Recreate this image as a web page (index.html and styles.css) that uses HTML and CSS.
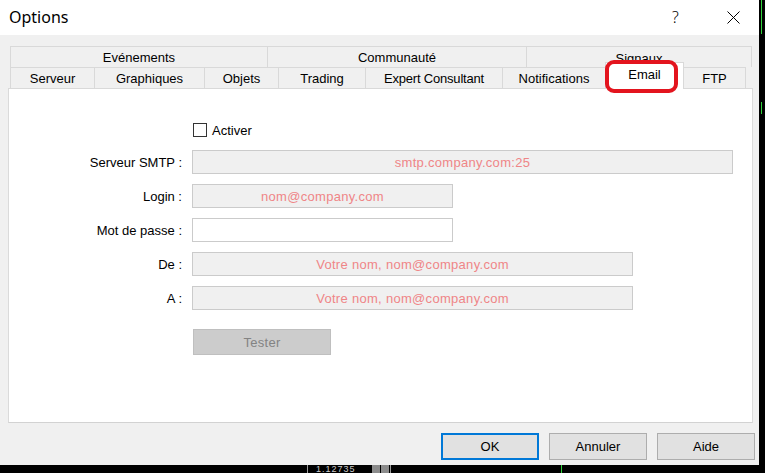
FILE: index.html
```html
<!DOCTYPE html>
<html lang="fr">
<head>
  <meta charset="UTF-8">
  <meta name="viewport" content="width=device-width, initial-scale=1.0">
  <title>Options</title>
  <link rel="stylesheet" href="styles.css">
</head>
<body>

<div class="screen">
  <div class="desk">
    <div class="window">
      <div class="titlebar">
        <span class="title">Options</span>
        <span class="help">?</span>
        <span class="close">
          <svg width="13" height="13" viewBox="0 0 13 13">
            <path d="M0.5 0.5 L12.5 12.5 M12.5 0.5 L0.5 12.5" stroke="#000" stroke-width="1" fill="none"/>
          </svg>
        </span>
      </div>

      <div class="client">
        <div class="tabs">
          <div class="tab-row">
            <div class="tab t-events">Evénements</div>
            <div class="tab t-community">Communauté</div>
            <div class="tab t-signals">Signaux</div>
          </div>
          <div class="tab-row">
            <div class="tab t-server">Serveur</div>
            <div class="tab t-charts">Graphiques</div>
            <div class="tab t-objects">Objets</div>
            <div class="tab t-trading">Trading</div>
            <div class="tab t-expert">Expert Consultant</div>
            <div class="tab t-notif">Notifications</div>
            <div class="tab t-email selected">
              Email
              <span class="highlight"></span>
            </div>
            <div class="tab t-ftp">FTP</div>
          </div>
        </div>

        <div class="panel">
          <div class="check-row">
            <span class="checkbox"></span>
            <span>Activer</span>
          </div>

          <div class="field first">
            <label>Serveur SMTP :</label>
            <div class="input wide">smtp.company.com:25</div>
          </div>
          <div class="field">
            <label>Login :</label>
            <div class="input short">nom@company.com</div>
          </div>
          <div class="field">
            <label>Mot de passe :</label>
            <div class="input short empty"></div>
          </div>
          <div class="field">
            <label>De :</label>
            <div class="input medium">Votre nom, nom@company.com</div>
          </div>
          <div class="field">
            <label>A :</label>
            <div class="input medium">Votre nom, nom@company.com</div>
          </div>

          <div class="test-row">
            <button class="tester" disabled>Tester</button>
          </div>
        </div>

        <div class="actions">
          <button class="btn default">OK</button>
          <button class="btn">Annuler</button>
          <button class="btn">Aide</button>
        </div>
      </div>
    </div>

    <!-- piece of the terminal behind the dialog -->
    <div class="edge">
      <span class="edge-green top"></span>
      <span class="edge-green mid"></span>
    </div>
  </div>

  <div class="taskbar">
    <span class="tick"></span>
    <span class="price">1.12735</span>
    <span class="sq"></span>
    <span class="sq"></span>
    <span class="tick"></span>
    <span class="green-line"></span>
  </div>
</div>

</body>
</html>
```

FILE: styles.css
```css
* {
  box-sizing: border-box;
}

body {
  margin: 0;
  width: 765px;
  height: 473px;
  overflow: hidden;
  font-family: "Liberation Sans", Arial, sans-serif;
  font-size: 13px;
  color: #000;
  background-color: #000;
}

.screen {
  display: flex;
  flex-direction: column;
  width: 765px;
  height: 473px;
}

.desk {
  display: flex;
  height: 465px;
}

.window {
  width: 759px;
  display: flex;
  flex-direction: column;
  background-color: #f0f0f0;
}

/* Title bar */
.titlebar {
  height: 35px;
  display: flex;
  align-items: center;
  padding-left: 9px;
  background-color: #fff;
}

.title {
  flex: 1;
  font-family: "Noto Sans", sans-serif;
  font-size: 16px;
  margin-top: -1px;
}

.help {
  width: 10px;
  font-family: "Noto Sans", sans-serif;
  font-size: 16px;
  font-weight: 300;
  margin-top: -2px;
}

.close {
  display: flex;
  margin-left: 45px;
  margin-right: 19px;
}

/* Client area */
.client {
  flex: 1;
  display: flex;
  flex-direction: column;
  padding-top: 11px;
}

.tabs {
  padding-left: 10px;
}

.tab-row {
  display: flex;
  height: 21px;
}

.tab {
  display: flex;
  align-items: center;
  justify-content: center;
  border: 1px solid #d9d9d9;
  border-bottom: none;
  margin-right: -1px;
  background-color: #f0f0f0;
  white-space: nowrap;
}

.t-events { width: 258px; }
.t-community { width: 260px; }
.t-signals { width: 226px; padding-top: 3px; }

.t-server { width: 85px; }
.t-charts { width: 111px; }
.t-objects { width: 75px; }
.t-trading { width: 88px; }
.t-expert { width: 138px; letter-spacing: -0.2px; }
.t-notif { width: 104px; }
.t-email { width: 79px; }
.t-ftp { width: 63px; }

.tab.selected {
  position: relative;
  z-index: 1;
  height: 27px;
  margin-top: -5px;
  padding-bottom: 4px;
  background-color: #fff;
}

/* red annotation drawn over the Email tab */
.highlight {
  position: absolute;
  left: -1px;
  top: -3px;
  width: 73px;
  height: 33px;
  border: 4px solid #e3141e;
  border-radius: 9px;
}

.panel {
  height: 335px;
  margin-left: 8px;
  margin-right: 6px;
  background-color: #fff;
  border: 1px solid #dadada;
  border-top: 1px solid #d9d9d9;
  border-bottom-color: #d2d2d2;
  padding-top: 34px;
  display: flex;
  flex-direction: column;
}

.check-row {
  display: flex;
  align-items: center;
  gap: 5px;
  height: 14px;
  padding-left: 184px;
}

.checkbox {
  width: 14px;
  height: 14px;
  border: 1px solid #333;
  background-color: #fff;
}

.field {
  display: flex;
  align-items: center;
  margin-top: 10px;
}

.field.first {
  margin-top: 13px;
}

.field label {
  width: 173px;
  margin-right: 10px;
  text-align: right;
}

.input {
  height: 24px;
  display: flex;
  align-items: center;
  justify-content: center;
  border: 1px solid #cbcbcb;
  background-color: #f0f0f0;
  color: #ef8587;
  letter-spacing: 0.3px;
}

.input.empty {
  background-color: #fff;
}

.wide { width: 541px; }
.short { width: 261px; }
.medium { width: 441px; }

.test-row {
  margin-top: 19px;
  padding-left: 184px;
}

.tester {
  width: 138px;
  height: 26px;
  font-family: inherit;
  font-size: 13px;
  letter-spacing: 0.3px;
  color: #838383;
  background-color: #cccccc;
  border: 1px solid #bfbfbf;
}

/* Bottom buttons */
.actions {
  display: flex;
  justify-content: flex-end;
  gap: 10px;
  margin-top: 10px;
  padding-right: 4px;
}

.btn {
  width: 98px;
  height: 27px;
  font-family: inherit;
  font-size: 13px;
  color: #000;
  background-color: #e1e1e1;
  border: 1px solid #adadad;
}

.btn.default {
  border: 2px solid #0078d7;
}

/* Terminal behind the dialog */
.edge {
  flex: 1;
  display: flex;
  flex-direction: column;
  background-color: #000;
  padding-left: 2px;
}

.edge-green {
  width: 1px;
  background-color: #2fd13a;
}

.edge-green.top {
  height: 34px;
}

.edge-green.mid {
  height: 12px;
  margin-top: 68px;
}

.taskbar {
  flex: 1;
  display: flex;
  align-items: flex-start;
  background-color: #000;
  padding-left: 307px;
}

.tick {
  width: 1px;
  height: 8px;
  background-color: #9a9a9a;
}

.price {
  font-size: 9px;
  line-height: 8px;
  color: #c8c8c8;
  margin-left: 8px;
  width: 56px;
  letter-spacing: 1px;
}

.sq {
  width: 8px;
  height: 8px;
  background-color: #8c8c8c;
  margin-right: 1px;
}

.green-line {
  width: 1px;
  height: 8px;
  margin-left: 170px;
  background-color: #2fd13a;
}
```
